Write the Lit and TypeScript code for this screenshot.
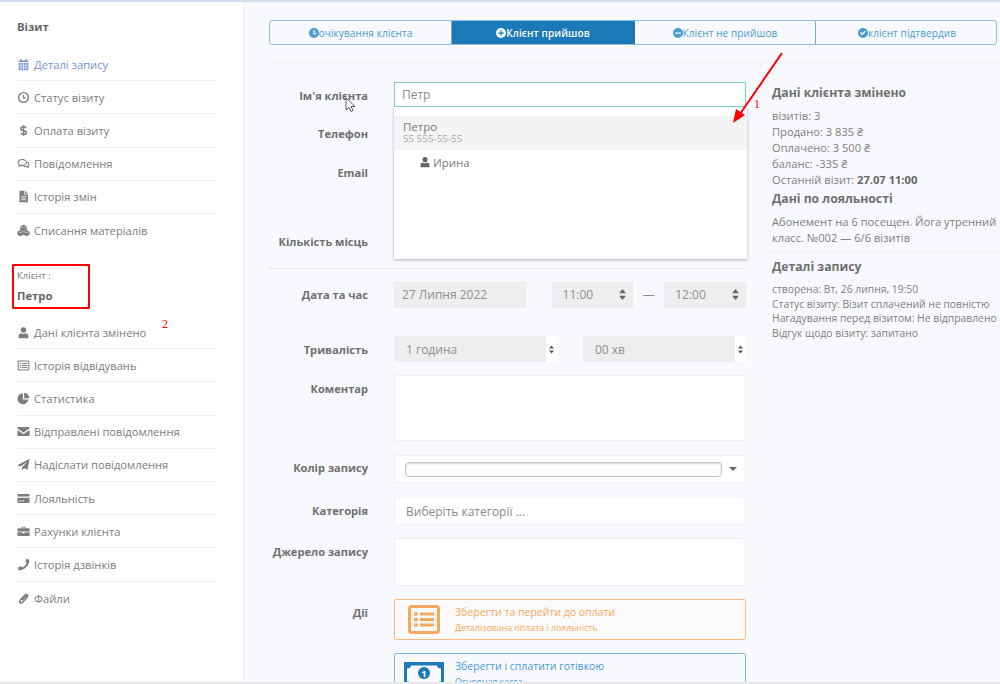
import { LitElement, html, css, svg } from "lit";
import { customElement } from "lit/decorators.js";

const icons: Record<string, unknown> = {
  calendar: svg`<path d="M2 6h12v8a1 1 0 0 1-1 1H3a1 1 0 0 1-1-1z M2 5V4a1 1 0 0 1 1-1h1V1.500h2V3h4V1.500h2V3h1a1 1 0 0 1 1 1v1z"/><path d="M5 6v9M8 6v9M11 6v9M2 9h12M2 12h12" stroke="#fff" stroke-width=".8" fill="none"/>`,
  clock: svg`<circle cx="8" cy="8" r="6" fill="none" stroke="currentColor" stroke-width="1.700"/><path d="M8 4.500V8.500H11" fill="none" stroke="currentColor" stroke-width="1.500"/>`,
  comments: svg`<path d="M6.500 3C3.500 3 1.300 4.600 1.300 6.700c0 1.100.6 2 1.600 2.700l-.6 1.700 2.200-1c.6.1 1.300.2 2 .2 3 0 5.200-1.600 5.200-3.600S9.500 3 6.500 3z" fill="none" stroke="currentColor" stroke-width="1.300"/><path d="M12.900 6.200c1.100.6 1.800 1.500 1.800 2.600 0 .9-.5 1.700-1.300 2.300l.6 1.700-2.300-1c-1.300.2-2.800 0-3.800-.6" fill="none" stroke="currentColor" stroke-width="1.300"/>`,
  file: svg`<path d="M3 1h6v4.500h4.500V15H3z M10 1l3.500 3.500H10z"/><path d="M5 8h6.500M5 10h6.500M5 12h6.500" stroke="#fff" stroke-width=".9"/>`,
  cubes: svg`<path d="M8 1 12 2.700v4.500L8 9 4 7.200V2.700z M4.300 7.500 8 9.100v4.200L4.300 15 .5 13.300V9.100z M11.700 7.500 15.500 9.100v4.200L11.700 15 8 13.300V9.100z"/><path d="M4 3l4 1.700L12 3M1 9.300l3.300 1.500 3.200-1.500M8.500 9.300l3.200 1.500L15 9.300" stroke="#fff" stroke-width=".6" fill="none"/>`,
  user: svg`<circle cx="8" cy="4.800" r="3.400"/><path d="M2 15v-2.600C2 10.200 3.500 8.800 5.200 8.800c.8.600 1.800 1 2.800 1s2-.4 2.800-1c1.700 0 3.200 1.400 3.200 3.600V15z"/>`,
  list: svg`<rect x="1.500" y="2.500" width="13" height="11" rx="1" fill="none" stroke="currentColor" stroke-width="1.300"/><path d="M3.500 5.500h1.500M3.500 8h1.500M3.500 10.500h1.500M6 5.500h6.500M6 8h6.500M6 10.500h6.500" stroke="currentColor" stroke-width="1.200"/>`,
  pie: svg`<path d="M7.300 1.500a6.800 6.800 0 1 0 6.800 7.800H7.300z M8.800 1v6.800h6.500A6.800 6.800 0 0 0 8.800 1z"/>`,
  mail: svg`<path d="M.5 3.500a1 1 0 0 1 1-1h13a1 1 0 0 1 1 1v.8L8 9.200.5 4.300z M.5 6.200 8 11l7.500-4.800v6.300a1 1 0 0 1-1 1h-13a1 1 0 0 1-1-1z"/>`,
  plane: svg`<path d="M15.500 1 12.900 14.500l-4.200-1.900L6.300 15.500v-4L12.500 4.500 4.300 10.400 .5 8.800z"/>`,
  card: svg`<path d="M.5 3.500a1 1 0 0 1 1-1h13a1 1 0 0 1 1 1v2H.5z M.5 7h15v5.500a1 1 0 0 1-1 1h-13a1 1 0 0 1-1-1z"/><path d="M2.500 11h2.500M6 11h2.500" stroke="#fff" stroke-width="1.100"/>`,
  case: svg`<path d="M5.500 4V2.700a.7.700 0 0 1 .7-.7h3.600a.7.700 0 0 1 .7.700V4H14.500a1 1 0 0 1 1 1v3H.5V5a1 1 0 0 1 1-1z M6.700 4h2.600V3.200H6.700z M.5 9h6v1.200h3V9h6v3.500a1 1 0 0 1-1 1h-13a1 1 0 0 1-1-1z"/>`,
  phone: svg`<path d="M15 2 11.800 1 10.300 5l1.700 1.200C11.200 8.300 8.700 10.900 6.300 11.800L5 10 1 11.700 2.200 15C8.700 16 16 8 15 2z"/>`,
  clip: svg`<path d="M13.300 4.200c-1.100-1.100-2.600-1.100-3.700 0L4 9.800c-1.100 1.100-1.100 2.200-.2 3 .8.800 2 .8 3-.2l5.200-5.200c.6-.6.600-1.300.1-1.800s-1.200-.5-1.800.1L6.500 9.500" fill="none" stroke="currentColor" stroke-width="1.900" stroke-linecap="round"/>`,
  dollar: svg`<path d="M11.500 4.700C10.800 3.800 9.500 3.300 8 3.300c-2 0-3.300 1-3.300 2.400 0 3.300 6.800 1.500 6.800 4.800 0 1.400-1.500 2.300-3.500 2.300-1.600 0-3-.6-3.700-1.600M8 1.500v13" fill="none" stroke="currentColor" stroke-width="1.900"/>`,
};

const ico = (n: string) => html`<svg class="ico" viewBox="0 0 16 16" fill="currentColor">${icons[n]}</svg>`;

const spin = html`<svg class="spin" viewBox="0 0 8 13" fill="currentColor"><path d="M4 0 8 5H0zM4 13 0 8h8z"/></svg>`;

const visit: [string, string][] = [
  ["clock", "Статус візиту"],
  ["dollar", "Оплата візиту"],
  ["comments", "Повідомлення"],
  ["file", "Історія змін"],
  ["cubes", "Списання матеріалів"],
];
const client: [string, string][] = [
  ["user", "Дані клієнта змінено"],
  ["list", "Історія відвідувань"],
  ["pie", "Статистика"],
  ["mail", "Відправлені повідомлення"],
  ["plane", "Надіслати повідомлення"],
  ["card", "Лояльність"],
  ["case", "Рахунки клієнта"],
  ["phone", "Історія дзвінків"],
  ["clip", "Файли"],
];

@customElement("app-root")
export class AppRoot extends LitElement {
  static styles = css`
    :host { display: block; width: 1000px; height: 684px; position: relative; overflow: hidden; font-family: "Open Sans", "Noto Sans", sans-serif; background: #f8f9fe; color: #7b7b7b; border-top: 2px solid #d6dfee; border-bottom: 2px solid #e6e7ea; box-sizing: border-box; }
    .page { display: flex; height: 100%; }
    .side { width: 244px; flex: none; background: #fff; border-right: 1px solid #eceef5; padding: 0 27px 0 17px; box-sizing: border-box; }
    .side h4 { margin: 17px 0 14px; font-size: 11.300px; line-height: 15px; font-weight: 700; color: #666; }
    .item { display: flex; align-items: center; height: 33.200px; border-bottom: 1px solid #eeeeee; box-sizing: border-box; font-size: 11.200px; color: #7d7d7d; white-space: nowrap; }
    .item:last-child { border-bottom: 0; }
    .grp2 .item { height: 33.180px; }
    .item.on { color: #7393d0; }
    .ico { width: 13px; height: 13px; flex: none; margin-right: 4px; }
    .client { width: 78px; height: 45px; margin: 17px 0 7px -5px; padding: 3px 0 0 3px; box-sizing: border-box; border: 2px solid #f00; border-radius: 1px; }
    .client small { display: block; font-size: 9.500px; line-height: 14px; color: #7d7d7d; }
    .client b { display: block; margin-top: 5px; font-size: 11.300px; line-height: 16px; color: #666; }
    .main { flex: 1; min-width: 0; padding: 18px 0 0 25px; overflow: hidden; }
    .group { display: grid; grid-template-columns: 182px 183px 181px 182px; width: 728px; height: 25px; box-sizing: border-box; border: 1px solid #8fbfe6; border-radius: 3px; background: #f8f9fe; }
    .seg { display: flex; align-items: center; justify-content: center; font-size: 10px; letter-spacing: .1px; color: #4a9ccf; border-right: 1px solid #6fabdc; white-space: nowrap; }
    .seg:last-child { border-right: 0; }
    .seg.on { background: #1a79b6; color: #fff; font-weight: 600; border-color: #1a79b6; }
    .seg svg { width: 10px; height: 10px; flex: none; }
    .dots { border-top: 1px dotted #e2e4ea; margin: 17px 3px 0 0; height: 0; }
    .cols { display: flex; gap: 26px; }
    .form { width: 477px; flex: none; padding-top: 19px; }
    .row { display: grid; grid-template-columns: 99px 352px; column-gap: 26px; }
    .row > label { text-align: right; font-size: 11.100px; font-weight: 700; line-height: 26px; color: #6f6f6f; white-space: nowrap; padding-top: 1px; }
    .fld { box-sizing: border-box; background: #fff; border: 1px solid #eff0f4; font-size: 12px; color: #8a8a8a; display: flex; align-items: center; white-space: nowrap; }
    .name { height: 25px; position: relative; z-index: 3; }
    .name .fld { height: 25px; border: 1px solid #7dd0bb; padding-left: 7px; }
    .row.name > label { padding-top: 0; line-height: 27px; }
    .r26 { height: 26px; }
    .phone { margin-top: 13px; }
    .email { margin-top: 14px; }
    .row.email > label, .row.seats > label { padding-top: 0; }
    .seats { margin-top: 43px; }
    .rule { margin-top: 13px; height: 1px; background: #e4e6ea; }
    .date { margin-top: 12px; height: 26px; }
    .ro { background: #eeeeee; border-color: #ebebeb; color: #8f8f8f; }
    .datef { display: flex; align-items: center; }
    .datef .d { width: 132px; height: 26px; padding-left: 7px; margin-right: 26px; }
    .datef .t { width: 82px; height: 26px; padding: 0 6px 0 10px; justify-content: space-between; }
    .dash { width: 31px; text-align: center; font-size: 12px; color: #8f8f8f; }
    .spin { width: 7px; height: 11px; color: #666; flex: none; }
    .dur { margin-top: 29px; height: 26px; }
    .durf { display: flex; justify-content: space-between; }
    .sel { width: 163px; height: 26px; display: flex; align-items: stretch; font-size: 12px; color: #8f8f8f; }
    .sel span { flex: 1; background: #eeeeee; display: flex; align-items: center; padding-left: 12px; }
    .sel i { width: 11px; background: #fff; display: flex; align-items: center; justify-content: center; }
    .sel .spin { width: 5px; height: 9px; color: #555; }
    .comment { margin-top: 13px; }
    .comment .fld { height: 66px; }
    .color { margin-top: 14px; }
    .color .fld { height: 28px; padding: 0 10px 0 10px; gap: 7px; border-radius: 2px; }
    .row.color > label { padding-top: 0; line-height: 25px; }
    .swatch { flex: 1; height: 15px; box-sizing: border-box; border: 1px solid #c4c4c4; border-radius: 4px; background: #fff; box-shadow: inset 0 1px 2px rgba(0,0,0,.15); }
    .caret { width: 0; height: 0; border: 4px solid transparent; border-top-color: #666; border-bottom: 0; margin-right: -2px; }
    .cat { margin-top: 14px; }
    .cat .fld { height: 28px; padding-left: 11px; font-size: 12px; }
    .src { margin-top: 13px; }
    .src .fld { height: 48px; }
    .act1 { margin-top: 13px; }
    .row.act1 > label { padding-top: 0; line-height: 27px; }
    .act2 { margin-top: 13px; }
    .act { box-sizing: border-box; height: 41px; display: flex; align-items: flex-start; border: 1px solid #f8bb7f; border-radius: 2px; color: #f6a95d; background: #fafafa; }
    .act2 .act { height: 60px; border-color: #7db6e4; color: #4a9ad4; background: #f8f9fe; }
    .act svg { flex: none; }
    .act1 .act svg { width: 32px; height: 29px; margin: 5px 15px 0 13px; }
    .act2 .act svg { width: 40px; height: 26px; margin: 8px 11px 0 9px; }
    .act b { display: block; font-weight: 400; font-size: 10.500px; line-height: 14px; margin-top: 5px; white-space: nowrap; }
    .act small { display: block; font-size: 8.800px; line-height: 12px; margin-top: 3px; white-space: nowrap; }
    .drop { position: absolute; left: 394px; top: 105px; width: 353px; height: 152px; background: #fff; box-shadow: 0 1px 3px rgba(40,50,90,.35); z-index: 2; box-sizing: border-box; padding-top: 9px; }
    .opt { height: 34px; background: #f4f4f4; padding: 4px 0 0 9px; box-sizing: border-box; font-size: 11.500px; line-height: 13px; color: #7b7b7b; }
    .opt small { display: block; font-size: 9.800px; line-height: 12px; color: #aaa; }
    .sub { display: flex; align-items: center; height: 24px; padding-left: 25px; font-size: 11.500px; color: #7b7b7b; }
    .sub .ico { width: 12px; height: 12px; color: #666; margin-right: 2px; }
    .info { width: 240px; flex: none; padding-top: 21px; font-size: 11.150px; line-height: 16px; color: #808080; white-space: nowrap; }
    .info h5 { margin: 0; font-size: 12.200px; line-height: 18px; font-weight: 700; color: #6f6f6f; }
    .info p { margin: 0; }
    .info .stats { margin-top: 6px; }
    .stats b { color: #666; }
    .info .loy { margin-top: 2px; }
    .info .loyp { margin-top: 6px; }
    .info .dots { margin: 5px 0 6px 0; }
    .info .det { margin-top: 6px; font-size: 10.350px; line-height: 14.700px; }
    .note { position: absolute; color: #f00; font: 12px "Liberation Serif", serif; z-index: 5; }
    .n1 { left: 754px; top: 95px; }
    .n2 { left: 162px; top: 315px; }
    .over { position: absolute; left: 0; top: -2px; z-index: 6; pointer-events: none; }
  `;

  render() {
    return html`
      <div class="page">
        <aside class="side">
          <h4>Візит</h4>
          <div>
            <div class="item on">${ico("calendar")}Деталі запису</div>
            ${visit.map(([i, t]) => html`<div class="item">${ico(i)}${t}</div>`)}
          </div>
          <div class="client"><small>Клієнт :</small><b>Петро</b></div>
          <div class="grp2">
            ${client.map(([i, t]) => html`<div class="item">${ico(i)}${t}</div>`)}
          </div>
        </aside>
        <main class="main">
          <div class="group">
            <div class="seg"><svg viewBox="0 0 16 16" fill="currentColor"><path d="M8 0a8 8 0 1 0 0 16A8 8 0 0 0 8 0zM7 3h2v5h3v2H7z" fill-rule="evenodd"/></svg>очікування клієнта</div>
            <div class="seg on"><svg viewBox="0 0 16 16" fill="currentColor"><path d="M8 0a8 8 0 1 0 0 16A8 8 0 0 0 8 0zM7 3.500h2V7h3.500v2H9v3.500H7V9H3.500V7H7z" fill-rule="evenodd"/></svg>Клієнт прийшов</div>
            <div class="seg"><svg viewBox="0 0 16 16" fill="currentColor"><path d="M8 0a8 8 0 1 0 0 16A8 8 0 0 0 8 0zM3.500 7h9v2h-9z" fill-rule="evenodd"/></svg>Клієнт не прийшов</div>
            <div class="seg"><svg viewBox="0 0 16 16" fill="currentColor"><path d="M8 0a8 8 0 1 0 0 16A8 8 0 0 0 8 0zM3.500 8 5 6.500l2 2 4-4L12.500 6 7 11.500z" fill-rule="evenodd"/></svg>клієнт підтвердив</div>
          </div>
          <div class="dots"></div>
          <div class="cols">
            <section class="form">
              <div class="row name"><label>Ім'я клієнта</label><div class="fld">Петр</div></div>
              <div class="row r26 phone"><label>Телефон</label><div></div></div>
              <div class="row r26 email"><label>Email</label><div></div></div>
              <div class="row r26 seats"><label>Кількість місць</label><div></div></div>
              <div class="rule"></div>
              <div class="row date"><label>Дата та час</label>
                <div class="datef">
                  <div class="fld ro d">27 Липня 2022</div>
                  <div class="fld ro t">11:00${spin}</div>
                  <div class="dash">—</div>
                  <div class="fld ro t">12:00${spin}</div>
                </div>
              </div>
              <div class="row dur"><label>Тривалість</label>
                <div class="durf">
                  <div class="sel"><span>1 година</span><i>${spin}</i></div>
                  <div class="sel"><span>00 хв</span><i>${spin}</i></div>
                </div>
              </div>
              <div class="row comment"><label>Коментар</label><div class="fld"></div></div>
              <div class="row color"><label>Колір запису</label><div class="fld"><div class="swatch"></div><div class="caret"></div></div></div>
              <div class="row cat"><label>Категорія</label><div class="fld">Виберіть категорії ...</div></div>
              <div class="row src"><label>Джерело запису</label><div class="fld"></div></div>
              <div class="row act1"><label>Дії</label>
                <div class="act">
                  <svg viewBox="0 0 32 29"><rect x="1.500" y="1.500" width="29" height="26" rx="2" fill="none" stroke="currentColor" stroke-width="3"/><g fill="currentColor"><circle cx="8" cy="9" r="2"/><circle cx="8" cy="14.500" r="2"/><circle cx="8" cy="20" r="2"/><rect x="12" y="7.500" width="14" height="3"/><rect x="12" y="13" width="14" height="3"/><rect x="12" y="18.500" width="14" height="3"/></g></svg>
                  <div><b>Зберегти та перейти до оплати</b><small>Деталізована оплата і лояльність</small></div>
                </div>
              </div>
              <div class="row act2"><label></label>
                <div class="act">
                  <svg viewBox="0 0 40 26"><path fill="#1a79b6" fill-rule="evenodd" d="M0 0h40v26H0zM7 3.500c0 2-2 3-4 3v13c2 0 4 1 4 3h26c0-2 2-3 4-3v-13c-2 0-4-1-4-3z"/><circle cx="20" cy="11" r="6" fill="#1a79b6"/><text x="20" y="14.500" text-anchor="middle" font-size="9.500" font-weight="700" fill="#fff" font-family="Open Sans, sans-serif">1</text></svg>
                  <div><b>Зберегти і сплатити готівкою</b><small>Основная касса</small></div>
                </div>
              </div>
            </section>
            <section class="info">
              <h5>Дані клієнта змінено</h5>
              <p class="stats">візитів: 3<br>Продано: 3 835 ₴<br>Оплачено: 3 500 ₴<br>баланс: -335 ₴<br>Останній візит: <b>27.07 11:00</b></p>
              <h5 class="loy">Дані по лояльності</h5>
              <p class="loyp">Абонемент на 6 посещен. Йога утренний<br>класс. №002 — 6/6 візитів</p>
              <div class="dots"></div>
              <h5>Деталі запису</h5>
              <p class="det">створена: Вт, 26 липня, 19:50<br>Статус візиту: Візит сплачений не повністю<br>Нагадування перед візитом: Не відправлено<br>Відгук щодо візиту: запитано</p>
            </section>
          </div>
        </main>
      </div>
      <div class="drop">
        <div class="opt">Петро<small>55 555-55-55</small></div>
        <div class="sub">${ico("user")} Ирина</div>
      </div>
      <span class="note n1">1</span>
      <span class="note n2">2</span>
      <svg class="over" width="1000" height="684" viewBox="0 0 1000 684">
        <path d="M782 53 740 114" stroke="#f00" stroke-width="2" fill="none"/>
        <path d="M733 123 736 109 745 115z" fill="#f00"/>
        <path d="M346 98v12l3-2.500 2 4 2-1-2-4h4z" fill="#fff" stroke="#333" stroke-width=".8"/>
      </svg>
    `;
  }
}
